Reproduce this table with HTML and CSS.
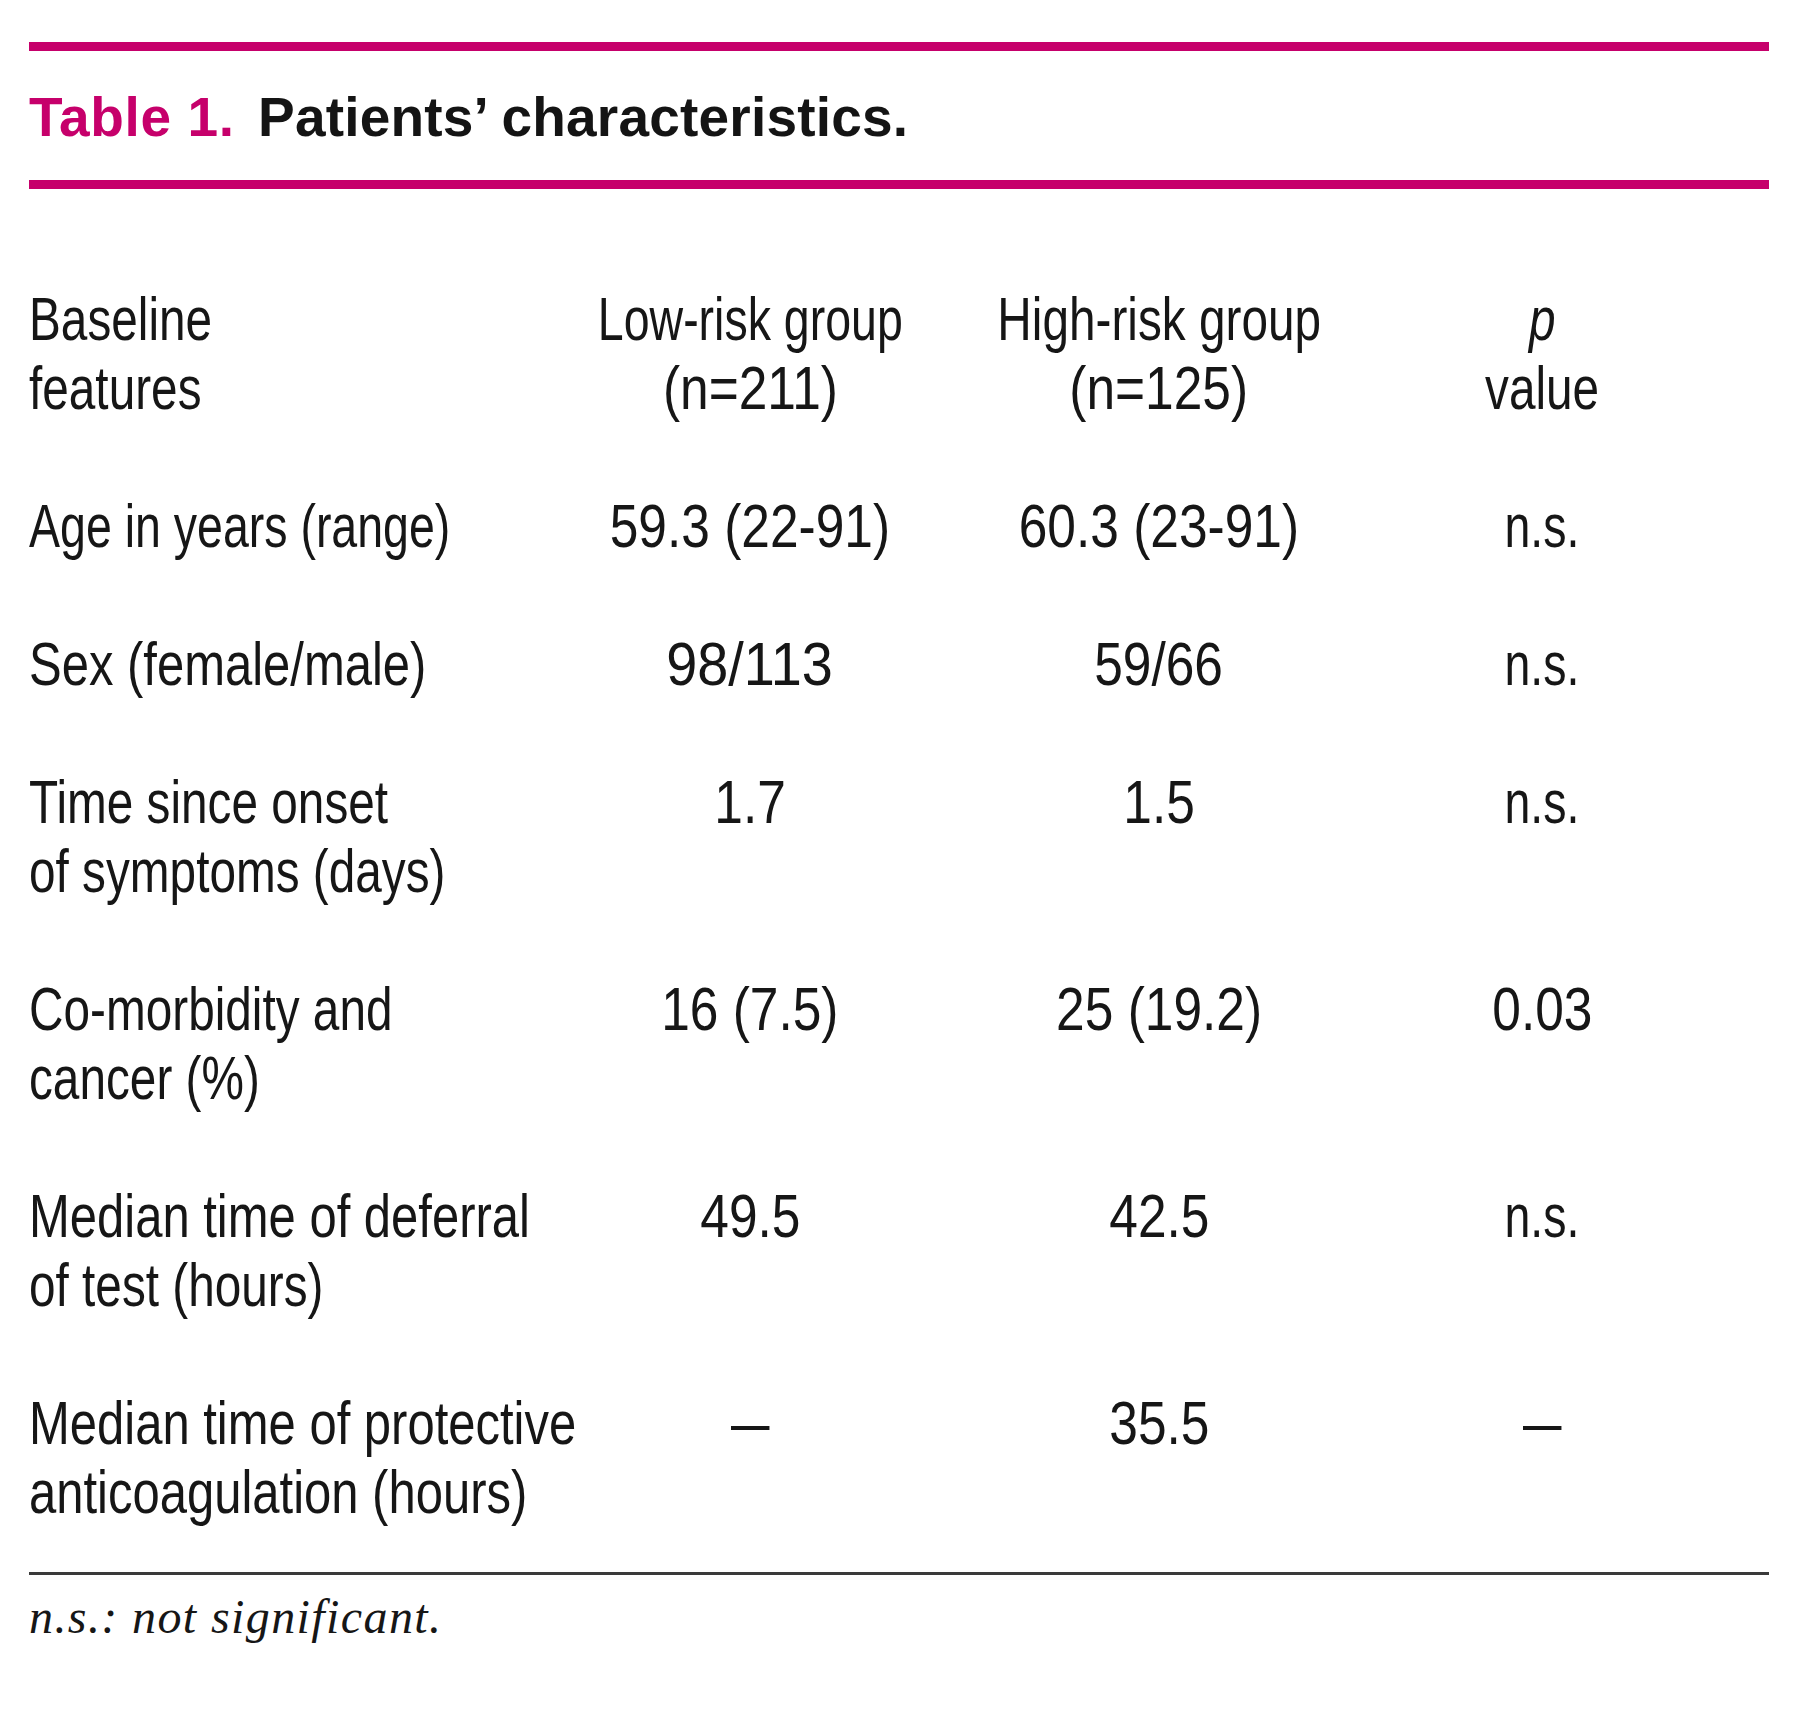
FILE: index.html
```html
<!DOCTYPE html>
<html lang="en">
<head>
<meta charset="utf-8">
<title>Table 1. Patients’ characteristics.</title>
<link rel="stylesheet" href="styles.css">
</head>
<body>
<div class="page">
  <div class="rule-accent"></div>
  <h1 class="title"><span class="title-num">Table 1.</span> Patients’ characteristics.</h1>
  <div class="rule-accent"></div>

  <div class="data">
    <div class="cell label"><span class="ln">Baseline</span><span class="ln">features</span></div>
    <div class="cell num"><span class="ln narrow">Low-risk group</span><span class="ln dig">(n=211)</span></div>
    <div class="cell num"><span class="ln">High-risk group</span><span class="ln dig">(n=125)</span></div>
    <div class="cell num"><span class="ln"><i>p</i></span><span class="ln">value</span></div>

    <div class="cell label"><span class="ln narrow">Age in years (range)</span></div>
    <div class="cell num"><span class="ln dig">59.3 (22-91)</span></div>
    <div class="cell num"><span class="ln dig">60.3 (23-91)</span></div>
    <div class="cell num"><span class="ln narrow">n.s.</span></div>

    <div class="cell label"><span class="ln wide">Sex (female/male)</span></div>
    <div class="cell num"><span class="ln digw">98/113</span></div>
    <div class="cell num"><span class="ln dig">59/66</span></div>
    <div class="cell num"><span class="ln narrow">n.s.</span></div>

    <div class="cell label"><span class="ln">Time since onset</span><span class="ln">of symptoms (days)</span></div>
    <div class="cell num"><span class="ln dig">1.7</span></div>
    <div class="cell num"><span class="ln dig">1.5</span></div>
    <div class="cell num"><span class="ln narrow">n.s.</span></div>

    <div class="cell label"><span class="ln">Co-morbidity and</span><span class="ln">cancer (%)</span></div>
    <div class="cell num"><span class="ln dig">16 (7.5)</span></div>
    <div class="cell num"><span class="ln dig">25 (19.2)</span></div>
    <div class="cell num"><span class="ln dig">0.03</span></div>

    <div class="cell label"><span class="ln wide">Median time of deferral</span><span class="ln">of test (hours)</span></div>
    <div class="cell num"><span class="ln dig">49.5</span></div>
    <div class="cell num"><span class="ln dig">42.5</span></div>
    <div class="cell num"><span class="ln narrow">n.s.</span></div>

    <div class="cell label"><span class="ln wide">Median time of protective</span><span class="ln wide">anticoagulation (hours)</span></div>
    <div class="cell num"><span class="ln"><span class="dash">–</span></span></div>
    <div class="cell num"><span class="ln dig">35.5</span></div>
    <div class="cell num"><span class="ln"><span class="dash">–</span></span></div>
  </div>

  <div class="rule-thin"></div>
  <p class="note">n.s.: not significant.</p>
</div>
</body>
</html>
```

FILE: styles.css
```css
html, body {
  margin: 0;
  padding: 0;
  background: #ffffff;
}

.page {
  width: 1740px;
  padding: 42px 31px 0 29px;
  color: #161616;
}

.rule-accent {
  height: 9px;
  background: #c6006b;
}

.title {
  margin: 36px 0 32px;
  font-family: "Liberation Sans", Arial, sans-serif;
  font-weight: 700;
  font-size: 55px;
  line-height: 61px;
  color: #141414;
  letter-spacing: 0.2px;
}

.title-num {
  color: #c6006b;
  margin-right: 8px;
  letter-spacing: 0.6px;
}

.data {
  margin-top: 95px;
  display: grid;
  grid-template-columns: 571px 300px 518px 248px;
  row-gap: 69px;
  font-family: "Liberation Sans", Arial, sans-serif;
  font-size: 62px;
  line-height: 69px;
  color: #161616;
}

.cell {
  display: flex;
  flex-direction: column;
  white-space: nowrap;
}

.label {
  align-items: flex-start;
}

.num {
  align-items: center;
}

.ln {
  display: block;
  flex: none;
  transform: scaleX(0.77);
}

.ln.narrow {
  transform: scaleX(0.75);
}

.ln.wide {
  transform: scaleX(0.79);
}

.ln.dig {
  transform: scaleX(0.83);
}

.ln.digw {
  transform: scaleX(0.9);
}

.label .ln {
  transform-origin: 0 50%;
}

.num .ln {
  transform-origin: 50% 50%;
}

.dash {
  display: inline-block;
  transform: scaleX(1.45);
}

.rule-thin {
  margin-top: 46px;
  height: 3px;
  background: #3a3a3a;
}

.note {
  margin: 15px 0 0 0;
  font-family: "Liberation Serif", "Times New Roman", serif;
  font-style: italic;
  font-size: 48px;
  line-height: 54px;
  letter-spacing: 1.4px;
  color: #161616;
}
```
